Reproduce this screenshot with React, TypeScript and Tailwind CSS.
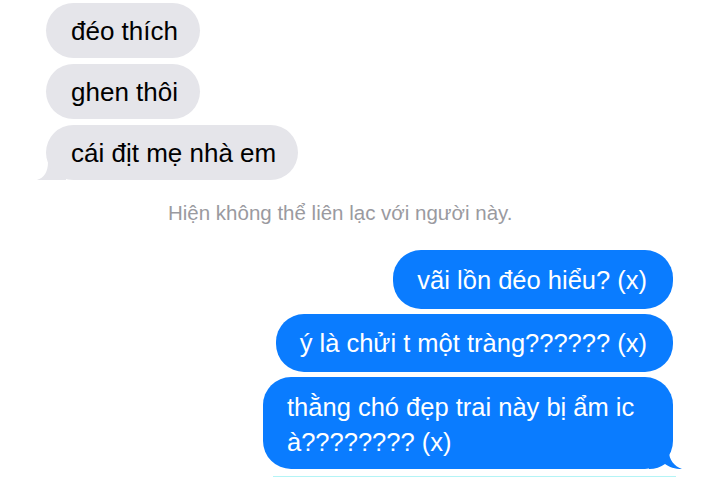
import React from "react";

const font = { fontFamily: '"Liberation Sans", Arial, sans-serif' };

function Gray({ text, tail }: { text: string; tail?: boolean }) {
  return (
    <div className="relative self-start">
      {tail && (
        <svg className="absolute left-[-10px] bottom-0" width="30" height="26" viewBox="0 0 30 26">
          <path d="M12 0 L30 0 L30 26 L1 26 C8 24 12 18 12 8 Z" fill="#e5e5ea" />
          <path d="M1 26 C6 25.5 11 24 15 21 L22 26 Z" fill="#e5e5ea" />
        </svg>
      )}
      <div className="relative h-[55px] rounded-[28px] bg-[#e5e5ea] pl-[25px] pr-[22px] flex items-center text-[26px] text-black leading-[30px]">
        {text}
      </div>
    </div>
  );
}

function Blue({ children, tail, className }: { children: React.ReactNode; tail?: boolean; className?: string }) {
  return (
    <div className="relative self-end">
      {tail && (
        <svg className="absolute right-[-10px] bottom-0" width="34" height="30" viewBox="0 0 34 30">
          <path d="M0 0 L20 0 L20 12 C20 21 25 27 33 30 C26 30 20 28 16 25 C12 28 6 30 0 30 Z" fill="#0a7cff" />
        </svg>
      )}
      <div className={"relative rounded-[28px] bg-[#0a7cff] text-white text-[25.5px] " + (className ?? "")}>
        {children}
      </div>
    </div>
  );
}

export default function App() {
  return (
    <div className="w-[720px] h-[477px] bg-white overflow-hidden flex flex-col" style={font}>
      <div className="flex flex-col gap-[6px] pl-[46px] pt-[3px]">
        <Gray text="đéo thích" />
        <Gray text="ghen thôi" />
        <Gray text="cái địt mẹ nhà em" tail />
      </div>
      <div className="mt-[21px] pl-[168px] text-[20.5px] leading-[24px] text-[#9a9a9f]">
        Hiện không thể liên lạc với người này.
      </div>
      <div className="mt-[25px] flex flex-col gap-[5px] pr-[47px]">
        <Blue className="h-[59px] pl-[24px] pr-[26px] flex items-center leading-[30px]">vãi lồn đéo hiểu? (x)</Blue>
        <Blue className="h-[58px] pl-[24px] pr-[26px] flex items-center leading-[30px]">ý là chửi t một tràng?????? (x)</Blue>
        <Blue tail className="h-[92px] w-[410px] pl-[24px] pr-[20px] pt-[13px] leading-[35px]">
          thằng chó đẹp trai này bị ẩm ic à???????? (x)
        </Blue>
      </div>
      <div className="mt-[7px] ml-[273px] w-[403px] h-[2px] bg-[#b4f4f6]" />
    </div>
  );
}
